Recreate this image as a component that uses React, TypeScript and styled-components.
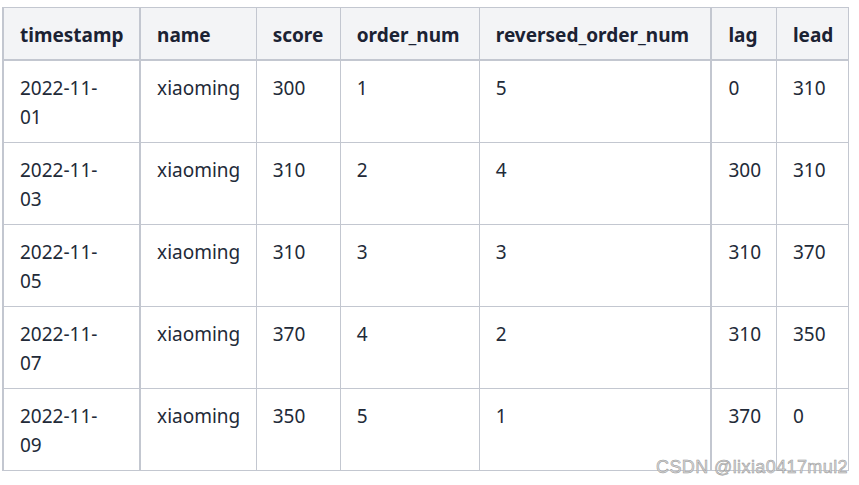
import React from 'react'
import styled, { createGlobalStyle } from 'styled-components'

const GlobalStyle = createGlobalStyle`
  html, body {
    margin: 0;
    padding: 0;
    background: #ffffff;
  }
  body {
    font-family: "Noto Sans", "Open Sans", "Liberation Sans", sans-serif;
  }
`

const Page = styled.div`
  position: relative;
  width: 859px;
  height: 485px;
  padding: 7px 0 0 2px;
  box-sizing: border-box;
  overflow: hidden;
`

const Table = styled.table`
  border-collapse: collapse;
  table-layout: fixed;
  width: 847px;
  font-size: 19px;
  line-height: 29px;
  color: #222a38;
  border-left: 2px solid #c3c7d0;
`

const HeadCell = styled.th<{ $thick?: boolean }>`
  text-align: left;
  font-weight: 700;
  color: #1b2233;
  background: #f3f4f6;
  padding: 13px 14px 9px 16px;
  border: 1px solid #c3c7d0;
  border-bottom: 2px solid #c3c7d0;
  border-right-width: ${p => (p.$thick ? '2px' : '1px')};
  white-space: nowrap;
`

const Cell = styled.td<{ $thick?: boolean; $narrow?: boolean }>`
  vertical-align: top;
  padding: 13px ${p => (p.$narrow ? '32px' : '8px')} 10px 16px;
  border: 1px solid #c3c7d0;
  border-right-width: ${p => (p.$thick ? '2px' : '1px')};
  white-space: ${p => (p.$narrow ? 'normal' : 'nowrap')};
`

const Watermark = styled.div`
  position: absolute;
  right: 11px;
  bottom: 7px;
  font-family: "Liberation Sans", Arial, sans-serif;
  font-size: 18px;
  color: #d8d8d8;
  -webkit-text-stroke: 0.5px #959595;
  letter-spacing: 0.4px;
  pointer-events: none;
`

const columns = [
  { key: 'timestamp', width: 137, thick: true, narrow: true },
  { key: 'name', width: 116 },
  { key: 'score', width: 84 },
  { key: 'order_num', width: 139 },
  { key: 'reversed_order_num', width: 232, thick: true },
  { key: 'lag', width: 65 },
  { key: 'lead', width: 72 },
]

const rows = [
  ['2022-11-01', 'xiaoming', '300', '1', '5', '0', '310'],
  ['2022-11-03', 'xiaoming', '310', '2', '4', '300', '310'],
  ['2022-11-05', 'xiaoming', '310', '3', '3', '310', '370'],
  ['2022-11-07', 'xiaoming', '370', '4', '2', '310', '350'],
  ['2022-11-09', 'xiaoming', '350', '5', '1', '370', '0'],
]

export default function App() {
  return (
    <Page>
      <GlobalStyle />
      <Table>
        <colgroup>
          {columns.map(c => <col key={c.key} style={{ width: c.width }} />)}
        </colgroup>
        <thead>
          <tr>
            {columns.map(c => <HeadCell key={c.key} $thick={c.thick}>{c.key}</HeadCell>)}
          </tr>
        </thead>
        <tbody>
          {rows.map((r, i) => (
            <tr key={i}>
              {r.map((v, j) => (
                <Cell key={j} $thick={columns[j].thick} $narrow={columns[j].narrow}>{v}</Cell>
              ))}
            </tr>
          ))}
        </tbody>
      </Table>
      <Watermark>CSDN @lixia0417mul2</Watermark>
    </Page>
  )
}
